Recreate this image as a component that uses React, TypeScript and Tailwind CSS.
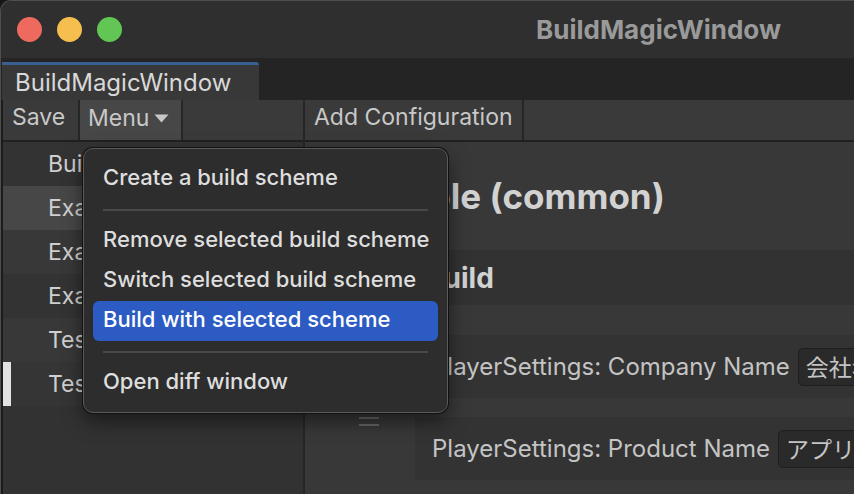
const schemes = [
  { name: "BuildMagic (common)", bg: "bg-[#333333]" },
  { name: "Example (common)", bg: "bg-[#474747]" },
  { name: "Example.Develop", bg: "bg-[#383838]" },
  { name: "Example.Release", bg: "bg-[#333333]" },
  { name: "Test.Develop", bg: "bg-[#383838]" },
  { name: "Test.Release", bg: "bg-[#353535]", marked: true },
];

function MenuItem({ label, active }: { label: string; active?: boolean }) {
  return (
    <div
      className={
        "h-[40px] flex items-center px-[10px] pb-[3px] rounded-[6px] whitespace-nowrap " +
        (active ? "bg-[#2c5bc4] text-white" : "text-[#dedede]")
      }
    >
      {label}
    </div>
  );
}

function Separator() {
  return (
    <div className="h-[22px] flex items-center px-[10px]">
      <div className="h-[2px] w-full bg-[#494949]" />
    </div>
  );
}

function Handle() {
  return (
    <div className="w-[110px] shrink-0 pl-[54px] flex flex-col gap-[5px]">
      <div className="w-[20px] h-[2px] bg-[#666666]" />
      <div className="w-[20px] h-[2px] bg-[#666666]" />
    </div>
  );
}

function SettingRow({ label, value }: { label: string; value: string }) {
  return (
    <div className="flex h-[63px] shrink-0">
      <Handle />
      <div className="flex-1 flex items-center gap-[8px] pl-[17px] bg-[#333333] text-[24px] text-[#c4c4c4] whitespace-nowrap overflow-hidden">
        {label}
        <div className="h-[38px] px-[7px] flex items-center rounded-[5px] bg-[#2a2a2a] border border-[#1d1d1d] text-[23px] font-['Noto_Sans_CJK_JP',sans-serif]">
          {value}
        </div>
      </div>
    </div>
  );
}

export default function App() {
  return (
    <div className="w-[854px] h-[494px] bg-[#161616] overflow-hidden font-['Inter',sans-serif] select-none">
      <div className="h-full flex flex-col rounded-tl-[11px] border-t border-l border-[#4e4e4e] overflow-hidden bg-[#303030]">
        {/* title bar */}
        <div className="h-[57px] shrink-0 flex items-center pl-[16px] bg-[#2f2f2f]">
          <div className="flex gap-[15px]">
            <span className="w-[25px] h-[25px] rounded-full bg-[#ee6a5f]" />
            <span className="w-[25px] h-[25px] rounded-full bg-[#f5be4f]" />
            <span className="w-[25px] h-[25px] rounded-full bg-[#62c655]" />
          </div>
          <div className="ml-auto mr-[73px] text-[26px] font-bold text-[#9a9a9a]">
            BuildMagicWindow
          </div>
        </div>

        {/* tab strip */}
        <div className="h-[42px] shrink-0 bg-[#242424] pl-[1px] pt-[4px] flex">
          <div className="w-[257px] bg-[#383838] border-t-[3px] border-[#3a5f92] rounded-tr-[3px] flex items-center pl-[13px] text-[24px] text-[#d8d8d8]">
            BuildMagicWindow
          </div>
        </div>

        {/* body */}
        <div className="flex-1 flex relative min-h-0">
          {/* left panel */}
          <div className="w-[302px] shrink-0 flex flex-col bg-[#323232] border-l-2 border-[#1c1c1c]">
            <div className="h-[42px] shrink-0 flex items-stretch bg-[#3a3a3a] border-b-2 border-[#202020] text-[23px] text-[#c8c8c8]">
              <div className="w-[77px] flex items-center pl-[9px] pb-[5px] border-r-2 border-[#262626]">Save</div>
              <div className="w-[103px] flex items-center gap-[5px] pl-[8px] pb-[3px] bg-[#474747] border-r-2 border-[#262626]">
                Menu
                <svg width="15" height="9" viewBox="0 0 15 9">
                  <path d="M0.5 0.5 L14.5 0.5 L7.5 8.5 Z" fill="#c8c8c8" />
                </svg>
              </div>
            </div>
            <div className="flex flex-col">
              {schemes.map((s) => (
                <div
                  key={s.name}
                  className={"h-[44px] flex items-center relative text-[23px] text-[#cfcfcf] pl-[45px] whitespace-nowrap overflow-hidden " + s.bg}
                >
                  {s.marked && <span className="absolute left-0 top-0 w-[8px] h-full bg-[#e2e2e2]" />}
                  {s.name}
                </div>
              ))}
            </div>
          </div>

          {/* splitter */}
          <div className="w-[2px] shrink-0 bg-[#262626]" />

          {/* right panel */}
          <div className="flex-1 flex flex-col min-w-0 bg-[#383838]">
            <div className="h-[42px] shrink-0 flex items-stretch bg-[#3a3a3a] border-b-2 border-[#202020] text-[23px] text-[#c8c8c8]">
              <div className="flex items-center px-[9px] pb-[5px] border-r-2 border-[#262626] whitespace-nowrap">
                Add Configuration
              </div>
            </div>
            <div className="flex-1 flex flex-col">
              <div className="h-[108px] shrink-0 flex items-center pl-[30px] text-[35px] font-bold text-[#d2d2d2] whitespace-nowrap">
                Example (common)
              </div>
              <div className="h-[55px] shrink-0 flex items-center pl-[120px] bg-[#323232] text-[28px] font-bold text-[#d2d2d2]">
                Build
              </div>
              <div className="h-[30px] shrink-0" />
              <SettingRow label="PlayerSettings: Company Name" value="会社名" />
              <div className="h-[19px] shrink-0" />
              <SettingRow label="PlayerSettings: Product Name" value="アプリ名" />
            </div>
          </div>

          {/* dropdown menu */}
          <div className="absolute left-[82px] top-[48px] w-[365px] p-[9px] pt-[10px] rounded-[10px] bg-[#2d2d2d] border border-[#5a5a5a] shadow-[0_0_0_1px_#111,0_8px_20px_rgba(0,0,0,0.5)] text-[22px] font-medium">
            <MenuItem label="Create a build scheme" />
            <Separator />
            <MenuItem label="Remove selected build scheme" />
            <MenuItem label="Switch selected build scheme" />
            <MenuItem label="Build with selected scheme" active />
            <Separator />
            <MenuItem label="Open diff window" />
          </div>
        </div>
      </div>
    </div>
  );
}
